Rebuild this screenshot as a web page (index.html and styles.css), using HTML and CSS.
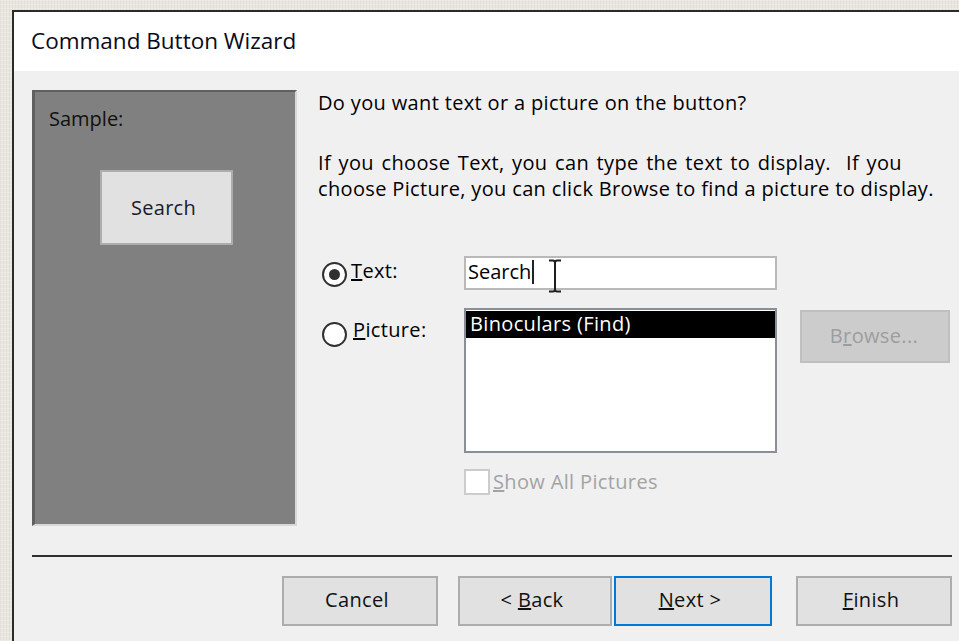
FILE: index.html
```html
<!DOCTYPE html>
<html lang="en">
<head>
<meta charset="utf-8">
<title>Command Button Wizard</title>
<link rel="stylesheet" href="styles.css">
</head>
<body>
<div class="desk">
  <div class="dialog">
    <div class="dialog-title">Command Button Wizard</div>
    <div class="dialog-body">
      <div class="inner">
        <div class="main">
          <div class="sample-panel">
            <div class="sample-label">Sample:</div>
            <div class="sample-button">Search</div>
          </div>
          <div class="details">
            <p class="question">Do you want text or a picture on the button?</p>
            <p class="hint"><span class="hint-first">If you choose Text, you can type the text to display.&nbsp; If you</span><br>choose Picture, you can click Browse to find a picture to display.</p>
            <div class="options">
              <label class="option option-text"><span class="radio checked"></span><span class="option-label"><u>T</u>ext:</span></label>
              <div class="textbox">
                <span class="textbox-value">Search</span><span class="caret"></span>
                <svg class="ibeam" width="18" height="36" viewBox="0 0 18 36" aria-hidden="true">
                  <path d="M3 2.5 H7 Q9 2.5 9 5 V31 Q9 33.5 7 33.5 H3 M15 2.5 H11 Q9 2.5 9 5 M9 31 Q9 33.5 11 33.5 H15" fill="none" stroke="#1e1e1e" stroke-width="2"/>
                </svg>
              </div>
              <span class="spacer"></span>

              <label class="option option-picture"><span class="radio"></span><span class="option-label"><u>P</u>icture:</span></label>
              <div class="listbox">
                <div class="list-item selected">Binoculars (Find)</div>
              </div>
              <button class="btn browse" type="button" disabled>B<u>r</u>owse...</button>

              <span class="spacer"></span>
              <label class="check-row"><span class="checkbox"></span><span><u>S</u>how All Pictures</span></label>
              <span class="spacer"></span>
            </div>
          </div>
        </div>
        <div class="separator"></div>
        <div class="actions">
          <button class="btn action cancel" type="button">Cancel</button>
          <button class="btn action back" type="button">&lt; <u>B</u>ack</button>
          <button class="btn action next" type="button"><u>N</u>ext &gt;</button>
          <button class="btn action finish" type="button"><u>F</u>inish</button>
        </div>
      </div>
    </div>
  </div>
</div>
</body>
</html>
```

FILE: styles.css
```css
html, body {
  margin: 0;
  padding: 0;
}

body {
  width: 959px;
  height: 641px;
  overflow: hidden;
  font-family: "Open Sans", "Noto Sans", sans-serif;
  font-size: 20px;
  line-height: 26px;
  color: #000;
  background-color: #e8e6df;
  background-image:
    repeating-linear-gradient(90deg, rgba(120, 110, 90, 0.06) 0 1px, transparent 1px 3px),
    repeating-linear-gradient(0deg, rgba(255, 255, 255, 0.25) 0 1px, transparent 1px 4px);
}

.desk {
  padding: 10px 0 0 12px;
}

.dialog {
  width: 1000px;
  border-top: 2px solid #2b2b2b;
  border-left: 2px solid #2b2b2b;
  background: #f0f0f0;
}

.dialog-title {
  height: 57px;
  padding: 0 0 2px 17px;
  background: #fff;
  font-size: 22.5px;
  line-height: 57px;
  color: #0a0a1a;
}

.dialog-body {
  padding: 19px 0 40px 18px;
}

.inner {
  width: 920px;
}

.main {
  display: flex;
  gap: 21px;
}

/* sunken preview area on the left */
.sample-panel {
  box-sizing: border-box;
  width: 265px;
  height: 436px;
  padding: 14px 0 0 14px;
  background: #808080;
  border-top: 2px solid #606060;
  border-left: 3px solid #606060;
  border-right: 2px solid #d8d8d8;
  border-bottom: 2px solid #d8d8d8;
}

.sample-label {
  color: #111;
}

.sample-button {
  box-sizing: border-box;
  width: 133px;
  height: 75px;
  margin: 38px 0 0 51px;
  padding-right: 6px;
  background: #e1e1e1;
  border: 2px solid #adadad;
  display: flex;
  align-items: center;
  justify-content: center;
  color: #1a1a2a;
  letter-spacing: 0.3px;
}

.details {
  width: 632px;
  letter-spacing: 0.35px;
}

.question {
  margin: 0;
}

.hint {
  margin: 34px 0 0;
  white-space: nowrap;
}

.hint-first {
  word-spacing: 2px;
}

.options {
  display: grid;
  grid-template-columns: 146px 313px 1fr;
  margin-top: 54px;
}

.option {
  display: flex;
  align-items: flex-start;
}

.radio {
  box-sizing: border-box;
  width: 25px;
  height: 25px;
  margin-left: 4px;
  border: 2px solid #303030;
  border-radius: 50%;
  background: #fff;
  display: flex;
  align-items: center;
  justify-content: center;
  flex: none;
}

.radio.checked::after {
  content: "";
  width: 11px;
  height: 11px;
  border-radius: 50%;
  background: #303030;
}

.option-text .radio {
  margin-top: 6px;
}

.option-text .option-label {
  margin: 2px 0 0 4px;
}

.option-picture {
  margin-top: 18px;
}

.option-picture .radio {
  margin-top: 14px;
}

.option-picture .option-label {
  margin: 9px 0 0 6px;
}

.textbox {
  position: relative;
  box-sizing: border-box;
  height: 34px;
  padding: 0 0 2px 2px;
  border: 2px solid #b9b9b9;
  background: #fff;
  line-height: 28px;
  white-space: nowrap;
  letter-spacing: 0;
}

.caret {
  display: inline-block;
  width: 2px;
  height: 24px;
  margin-left: 1px;
  vertical-align: -5px;
  background: #222;
}

/* mouse pointer resting over the field */
.ibeam {
  position: absolute;
  left: 80px;
  top: 0;
}

.listbox {
  box-sizing: border-box;
  height: 145px;
  margin-top: 18px;
  padding: 1px 0 0;
  border: 2px solid #8a8e96;
  background: #fff;
}

.list-item {
  height: 27px;
  padding-left: 4px;
  line-height: 25px;
  white-space: nowrap;
}

.list-item.selected {
  background: #000;
  color: #fff;
}

.btn {
  box-sizing: border-box;
  font: inherit;
  letter-spacing: 0.35px;
  line-height: 24px;
  padding: 0 6px 2px 0;
  margin: 0;
  background: #e1e1e1;
  border: 2px solid #adadad;
  color: #111;
  text-align: center;
}

.browse {
  justify-self: end;
  align-self: start;
  width: 150px;
  height: 53px;
  margin-top: 20px;
  padding-right: 2px;
  background: #cccccc;
  border-color: #bfbfbf;
  color: #9d9d9d;
}

.check-row {
  display: flex;
  align-items: center;
  margin-top: 16px;
  color: #a3a3a3;
  white-space: nowrap;
}

.checkbox {
  box-sizing: border-box;
  width: 26px;
  height: 26px;
  margin-right: 3px;
  border: 2px solid #cccccc;
  background: #fff;
  flex: none;
}

.separator {
  height: 2px;
  margin-top: 29px;
  background: #2f2f2f;
}

.actions {
  display: flex;
  justify-content: flex-end;
  margin-top: 19px;
}

.action {
  width: 156px;
  height: 50px;
}

.back {
  width: 154px;
  margin-left: 20px;
}

.next {
  width: 158px;
  margin-left: 2px;
  border-color: #0078d7;
}

.finish {
  margin-left: 24px;
}
```
